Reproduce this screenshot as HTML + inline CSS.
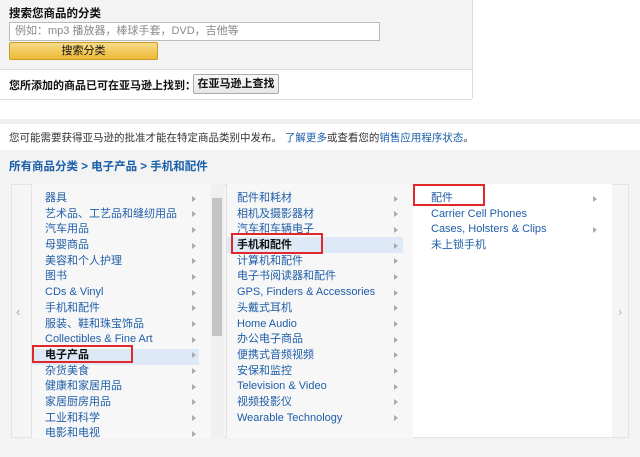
<!DOCTYPE html>
<html><head><meta charset="utf-8"><style>
*{margin:0;padding:0;box-sizing:border-box}
body{width:640px;height:457px;background:#fff;font-family:"Liberation Sans","Noto Sans CJK SC",sans-serif;font-size:11px;color:#111;position:relative;overflow:hidden}
.abs{position:absolute}
.top{left:0;top:0;width:473px;height:70px;background:#f3f3f3;border-right:1px solid #ddd;border-bottom:1px solid #ddd}
.row2{left:0;top:70px;width:473px;height:30px;background:#fff;border-right:1px solid #ddd;border-bottom:1px solid #ddd;border-radius:0 0 3px 0}
.blue{color:#1a5fa8}
.list div{height:15.7px;line-height:15.7px;white-space:nowrap;position:relative;padding-left:13px;color:#1f5ea8}
.list div.a::after{content:"";position:absolute;right:6px;top:4.5px;border-left:4px solid #aaa;border-top:3.5px solid transparent;border-bottom:3.5px solid transparent}
.red{border:2px solid #e0282c}
</style></head><body>
<div class="abs top">
 <div class="abs" style="left:9px;top:5px;font-weight:bold;font-size:11.5px">搜索您商品的分类</div>
 <div class="abs" style="left:9px;top:22px;width:371px;height:19px;background:#fff;border:1px solid #bbb;color:#888;font-size:11px;line-height:17px;padding-left:5px">例如：mp3 播放器，棒球手套，DVD，吉他等</div>
 <div class="abs" style="left:9px;top:42px;width:149px;height:18px;background:linear-gradient(#f7dc8a,#eeb933);border:1px solid #c89c2a;border-radius:2px;text-align:center;line-height:16px">搜索分类</div>
</div>
<div class="abs row2">
 <div class="abs" style="left:9px;top:7px;font-weight:bold">您所添加的商品已可在亚马逊上找到：</div>
 <div class="abs" style="left:193px;top:4px;width:86px;height:20px;background:linear-gradient(#f9f9f9,#e6e6e6);border:1px solid #aaa;border-radius:2px;text-align:center;line-height:18px;font-weight:bold">在亚马逊上查找</div>
</div>
<div class="abs" style="left:0;top:119px;width:640px;height:5px;background:#f0f0f0"></div>
<div class="abs" style="left:9px;top:130px;font-size:10.5px;color:#333">您可能需要获得亚马逊的批准才能在特定商品类别中发布。 <span class="blue">了解更多</span>或查看您的<span class="blue">销售应用程序状态</span>。</div>
<div class="abs" style="left:0;top:150px;width:640px;height:307px;background:#f3f3f3"></div>
<div class="abs blue" style="left:9px;top:158px;font-weight:bold;font-size:11.5px">所有商品分类 &gt; 电子产品 &gt; 手机和配件</div>
<div class="abs" style="left:11px;top:184px;width:618px;height:254px;background:#f5f5f5;border:1px solid #e4e4e4"></div>
<div class="abs" style="left:16px;top:304px;color:#aaa;font-size:13px">‹</div>
<div class="abs" style="left:31px;top:184px;width:180px;height:254px;background:#f7f7f7;border-left:1px solid #e2e2e2;overflow:hidden">
 <div class="abs" style="left:0;top:165px;width:167px;height:16px;background:#dde9f7"></div>
 <div class="list abs" style="left:0;top:7px;width:170px">
  <div class="a">器具</div><div class="a">艺术品、工艺品和缝纫用品</div><div class="a">汽车用品</div><div class="a">母婴商品</div><div class="a">美容和个人护理</div><div class="a">图书</div><div class="a">CDs &amp; Vinyl</div><div class="a">手机和配件</div><div class="a">服装、鞋和珠宝饰品</div><div class="a">Collectibles &amp; Fine Art</div><div class="a" style="font-weight:bold;color:#111">电子产品</div><div class="a">杂货美食</div><div class="a">健康和家居用品</div><div class="a">家居厨房用品</div><div class="a">工业和科学</div><div class="a">电影和电视</div>
 </div>
</div>
<div class="abs" style="left:211px;top:184px;width:13px;height:254px;background:#f0f0f0"></div>
<div class="abs" style="left:212px;top:198px;width:10px;height:138px;background:#c4c4c4"></div>
<div class="abs" style="left:226px;top:184px;width:187px;height:254px;background:#f7f7f7;border-left:1px solid #e2e2e2">
 <div class="abs" style="left:0;top:53px;width:176px;height:16px;background:#dde9f7"></div>
 <div class="list abs" style="left:-3px;top:7px;width:180px">
  <div class="a">配件和耗材</div><div class="a">相机及摄影器材</div><div class="a">汽车和车辆电子</div><div class="a" style="font-weight:bold;color:#111">手机和配件</div><div class="a">计算机和配件</div><div class="a">电子书阅读器和配件</div><div class="a">GPS, Finders &amp; Accessories</div><div class="a">头戴式耳机</div><div class="a">Home Audio</div><div class="a">办公电子商品</div><div class="a">便携式音频视频</div><div class="a">安保和监控</div><div class="a">Television &amp; Video</div><div class="a">视频投影仪</div><div class="a">Wearable Technology</div>
 </div>
</div>
<div class="abs" style="left:413px;top:184px;width:199px;height:253px;background:#fff">
 <div class="list abs" style="left:5px;top:7px;width:185px">
  <div class="a">配件</div><div>Carrier Cell Phones</div><div class="a">Cases, Holsters &amp; Clips</div><div>未上锁手机</div>
 </div>
</div>
<div class="abs" style="left:618px;top:304px;color:#bbb;font-size:13px">›</div>
<div class="abs red" style="left:32px;top:345px;width:101px;height:18px"></div>
<div class="abs red" style="left:231px;top:233px;width:92px;height:21px"></div>
<div class="abs red" style="left:413px;top:184px;width:72px;height:22px"></div>
</body></html>
